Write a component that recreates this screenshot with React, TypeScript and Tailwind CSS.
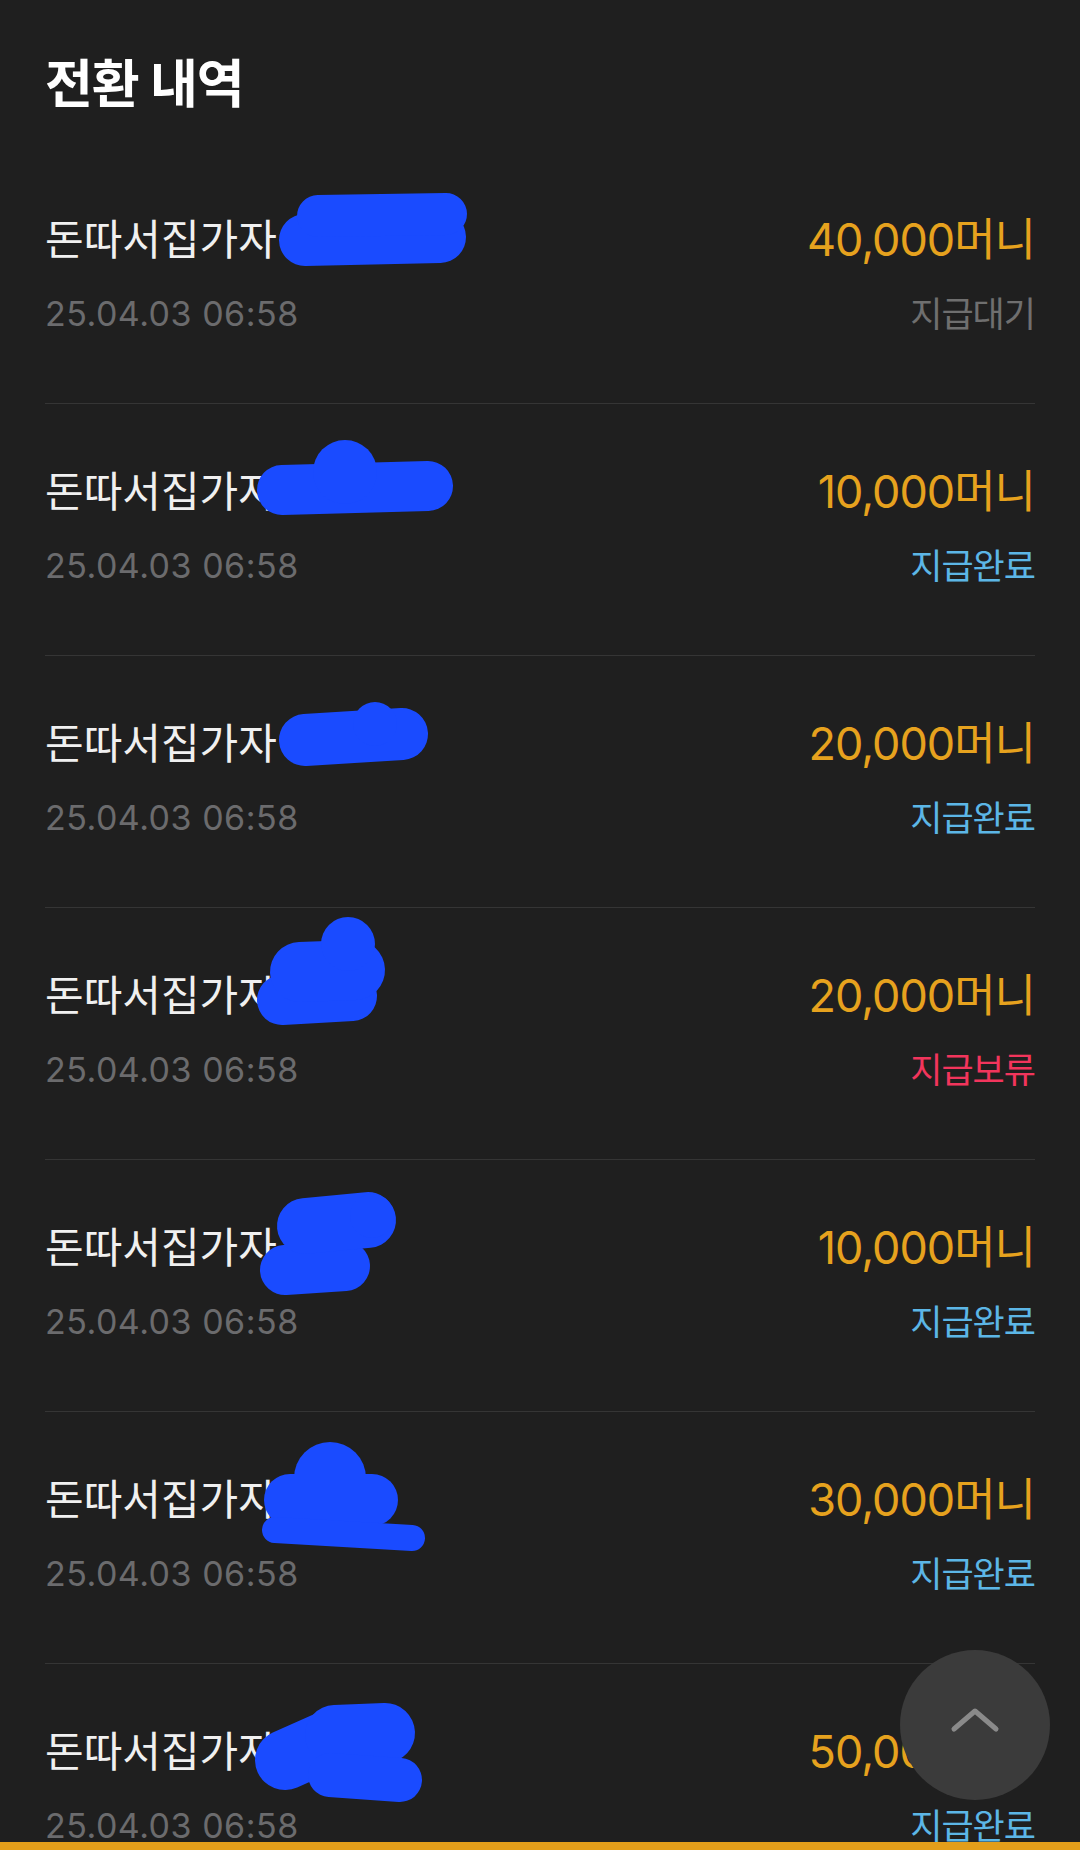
import React from "react";

type Row = { amount: string; status: string; tone: "wait" | "done" | "hold" };

const rows: Row[] = [
  { amount: "40,000", status: "지급대기", tone: "wait" },
  { amount: "10,000", status: "지급완료", tone: "done" },
  { amount: "20,000", status: "지급완료", tone: "done" },
  { amount: "20,000", status: "지급보류", tone: "hold" },
  { amount: "10,000", status: "지급완료", tone: "done" },
  { amount: "30,000", status: "지급완료", tone: "done" },
  { amount: "50,000", status: "지급완료", tone: "done" },
];

const toneClass: Record<Row["tone"], string> = {
  wait: "text-[#6f6f6f]",
  done: "text-[#5cb6e6]",
  hold: "text-[#f2355c]",
};

const font = { fontFamily: '"Inter", "Noto Sans CJK KR", sans-serif' };

export default function App() {
  return (
    <div className="relative h-[1850px] w-[1080px] overflow-hidden bg-[#1f1f1f]" style={font}>
      <div className="px-[45px]">
        <h1 className="pt-[59px] pb-[41px] text-[52px] leading-[52px] font-bold tracking-[-1px] text-white">
          전환 내역
        </h1>
        {rows.map((r, i) => (
          <div
            key={i}
            className="flex items-start justify-between border-b border-[#353535] pt-[64px] pb-[69px]"
          >
            <div className="flex flex-col gap-[30px]">
              <div className="h-[48px] text-[42px] leading-[48px] text-[#f0f0f0]">
                돈따서집가자
              </div>
              <div className="h-[40px] text-[34px] leading-[40px] tracking-[0.5px] text-[#6b6b6d]">
                25.04.03 06:58
              </div>
            </div>
            <div className="flex flex-col items-end gap-[30px]">
              <div className="h-[48px] text-[45px] leading-[48px] tracking-[-1px] text-[#e6a21e]">
                {r.amount}머니
              </div>
              <div className={`h-[40px] text-[35px] leading-[40px] tracking-[-1px] ${toneClass[r.tone]}`}>
                {r.status}
              </div>
            </div>
          </div>
        ))}
      </div>

      {/* redaction scribbles */}
      <svg
        className="pointer-events-none absolute left-0 top-0"
        width="1080"
        height="1850"
        viewBox="0 0 1080 1850"
      >
        <g fill="#1a4bff" stroke="#1a4bff" strokeLinecap="round" strokeLinejoin="round">
          {/* row 1 */}
          <path d="M305 240 L440 237" strokeWidth="52" fill="none" />
          <path d="M318 216 L446 214" strokeWidth="42" fill="none" />
          {/* row 2 */}
          <path d="M282 490 L428 486" strokeWidth="50" fill="none" />
          <circle cx="345" cy="472" r="32" stroke="none" />
          {/* row 3 */}
          <path d="M305 740 L402 734" strokeWidth="52" fill="none" />
          <circle cx="375" cy="724" r="22" stroke="none" />
          {/* row 4 */}
          <path d="M282 1000 L352 996" strokeWidth="50" fill="none" />
          <path d="M300 972 L355 970" strokeWidth="60" fill="none" />
          <circle cx="348" cy="944" r="27" stroke="none" />
          {/* row 5 */}
          <path d="M285 1270 L345 1266" strokeWidth="50" fill="none" />
          <path d="M305 1226 L368 1220" strokeWidth="56" fill="none" />
          <circle cx="372" cy="1216" r="22" stroke="none" />
          {/* row 6 */}
          <circle cx="330" cy="1478" r="36" stroke="none" />
          <path d="M290 1500 L372 1500" strokeWidth="52" fill="none" />
          <path d="M275 1530 L412 1538" strokeWidth="26" fill="none" />
          {/* row 7 */}
          <path d="M285 1760 L330 1740" strokeWidth="60" fill="none" />
          <path d="M335 1735 L385 1733" strokeWidth="60" fill="none" />
          <path d="M330 1775 L400 1780" strokeWidth="44" fill="none" />
        </g>
      </svg>

      {/* scroll to top button */}
      <button className="absolute left-[900px] top-[1650px] flex h-[150px] w-[150px] items-center justify-center rounded-full bg-[#3b3b3b]">
        <svg width="56" height="36" viewBox="0 0 56 36" className="mt-[-12px]">
          <path
            d="M7 28 L28 10 L49 28"
            fill="none"
            stroke="#8a8a8a"
            strokeWidth="5"
            strokeLinecap="round"
            strokeLinejoin="round"
          />
        </svg>
      </button>

      {/* bottom bar */}
      <div className="absolute bottom-0 left-0 h-[8px] w-full bg-[#e39e1a]" />
    </div>
  );
}
